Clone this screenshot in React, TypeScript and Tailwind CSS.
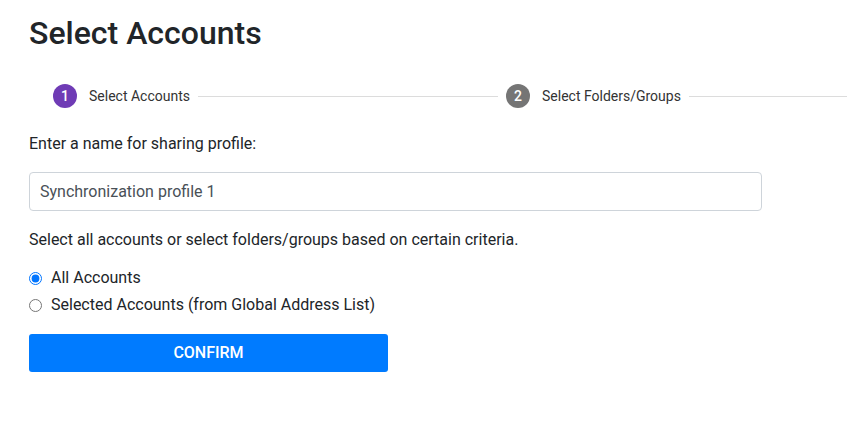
import { useState } from "react";

const font = { fontFamily: "Roboto, 'Liberation Sans', sans-serif" };

function StepIcon({ n, active }: { n: number; active?: boolean }) {
  return (
    <div
      className={
        "flex h-6 w-6 shrink-0 items-center justify-center rounded-full text-[14px] font-medium text-white " +
        (active ? "bg-[#6f3bb5]" : "bg-[#757575]")
      }
    >
      {n}
    </div>
  );
}

export default function App() {
  const [name, setName] = useState("Synchronization profile 1");
  const [mode, setMode] = useState<"all" | "selected">("all");

  return (
    <div className="min-h-screen w-full overflow-hidden bg-white text-[#212529]" style={font}>
      <div className="pl-[29px] pt-[14px]">
        <h1 className="text-[32px] font-medium leading-[38px] text-[#212529]">Select Accounts</h1>

        {/* stepper */}
        <div className="mt-[32px] flex w-[1100px] items-center pl-6">
          <div className="flex items-center gap-3">
            <StepIcon n={1} active />
            <span className="text-[14px] text-[#333]">Select Accounts</span>
          </div>
          <div className="mx-2 h-px w-[300px] bg-[#dcdcdc]" />
          <div className="flex items-center gap-3">
            <StepIcon n={2} />
            <span className="text-[14px] text-[#333]">Select Folders/Groups</span>
          </div>
          <div className="ml-2 h-px flex-1 bg-[#dcdcdc]" />
        </div>

        <p className="mt-[24px] text-[16px] leading-[24px]">Enter a name for sharing profile:</p>

        <input
          value={name}
          onChange={(e) => setName(e.target.value)}
          className="mt-[16px] block h-[39px] w-[733px] rounded border border-[#ced4da] px-[10px] text-[16px] text-[#495057] outline-none"
          style={font}
        />

        <p className="mt-[17px] text-[16px] leading-[24px]">
          Select all accounts or select folders/groups based on certain criteria.
        </p>

        <div className="mt-[14px] flex flex-col gap-[3px]">
          <label className="flex items-center gap-[9px] text-[16px] leading-[24px]">
            <input
              type="radio"
              name="mode"
              checked={mode === "all"}
              onChange={() => setMode("all")}
              className="m-0 h-[13px] w-[13px] accent-[#0075ff]"
            />
            All Accounts
          </label>
          <label className="flex items-center gap-[9px] text-[16px] leading-[24px]">
            <input
              type="radio"
              name="mode"
              checked={mode === "selected"}
              onChange={() => setMode("selected")}
              className="m-0 h-[13px] w-[13px] accent-[#0075ff]"
            />
            Selected Accounts (from Global Address List)
          </label>
        </div>

        <button className="mt-[17px] block h-[38px] w-[359px] rounded-[3px] bg-[#007bff] text-[16px] font-medium text-white">
          CONFIRM
        </button>
      </div>
    </div>
  );
}
